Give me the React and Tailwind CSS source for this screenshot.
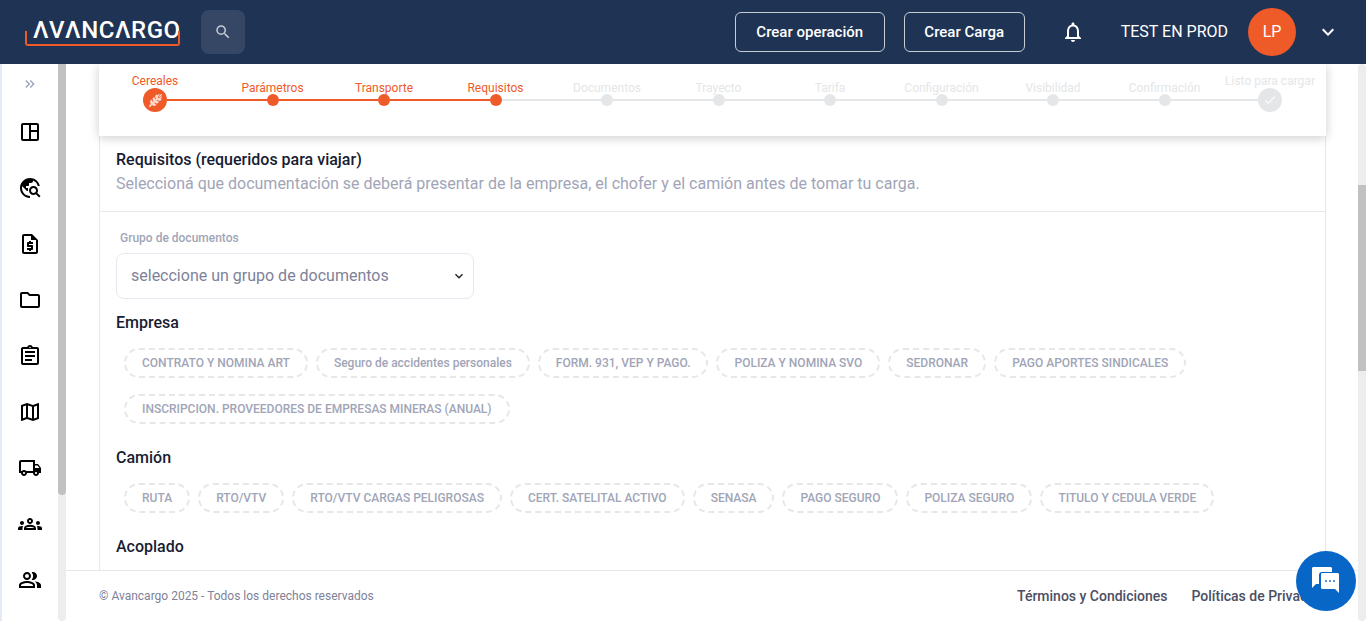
import {
  MdCheck,
  MdKeyboardArrowDown,
  MdKeyboardDoubleArrowRight,
  MdOutlineAssignment,
  MdOutlineFolder,
  MdOutlineGroups,
  MdOutlineLocalShipping,
  MdOutlineMap,
  MdOutlineNotifications,
  MdOutlinePeopleAlt,
  MdOutlineRequestQuote,
  MdOutlineSpaceDashboard,
  MdOutlineTravelExplore,
  MdSearch,
} from 'react-icons/md';
import { FaWheatAwn } from 'react-icons/fa6';

const SIDE_ICONS = [
  MdOutlineSpaceDashboard,
  MdOutlineTravelExplore,
  MdOutlineRequestQuote,
  MdOutlineFolder,
  MdOutlineAssignment,
  MdOutlineMap,
  MdOutlineLocalShipping,
  MdOutlineGroups,
  MdOutlinePeopleAlt,
];

const STEPS = [
  { label: 'Cereales', done: true, big: true },
  { label: 'Parámetros', done: true },
  { label: 'Transporte', done: true },
  { label: 'Requisitos', done: true },
  { label: 'Documentos' },
  { label: 'Trayecto' },
  { label: 'Tarifa' },
  { label: 'Configuración' },
  { label: 'Visibilidad' },
  { label: 'Confirmación' },
  { label: 'Listo para cargar', big: true },
];

const EMPRESA = [
  'CONTRATO Y NOMINA ART',
  'Seguro de accidentes personales',
  'FORM. 931, VEP Y PAGO.',
  'POLIZA Y NOMINA SVO',
  'SEDRONAR',
  'PAGO APORTES SINDICALES',
  'INSCRIPCION. PROVEEDORES DE EMPRESAS MINERAS (ANUAL)',
];

const CAMION = [
  'RUTA',
  'RTO/VTV',
  'RTO/VTV CARGAS PELIGROSAS',
  'CERT. SATELITAL ACTIVO',
  'SENASA',
  'PAGO SEGURO',
  'POLIZA SEGURO',
  'TITULO Y CEDULA VERDE',
];

function Step({ step }) {
  const color = step.done ? 'text-[#ef5a29]' : 'text-[#e4e6e8]';
  const bg = step.done ? 'bg-[#ef5a29]' : 'bg-[#e4e6e8]';
  return (
    <div className={`relative shrink-0 flex items-center justify-center rounded-full ${bg} ${step.big ? 'w-6 h-6' : 'w-3 h-3'}`}>
      <span className={`absolute left-1/2 -translate-x-1/2 whitespace-nowrap text-xs leading-4 ${color} ${step.big ? 'bottom-[23px]' : 'bottom-[10px]'}`}>
        {step.label}
      </span>
      {step.big && step.done && <FaWheatAwn className="text-[#fbd9cc]" size={13} />}
      {step.big && !step.done && <MdCheck className="text-white" size={14} />}
    </div>
  );
}

function Chips({ items }) {
  return (
    <div className="flex flex-wrap gap-x-2 gap-y-4 px-2">
      {items.map((c) => (
        <span key={c} className="h-[30px] flex items-center px-4 rounded-full border-2 border-dashed border-[#e6e7e9] text-xs font-medium text-[#a1a5b7] whitespace-nowrap">
          {c}
        </span>
      ))}
    </div>
  );
}

export default function App() {
  return (
    <div className="h-screen overflow-hidden flex flex-col bg-white font-['Roboto',sans-serif]">
      {/* Header */}
      <header className="h-16 shrink-0 bg-[#1f3354] flex items-center pl-[25px] pr-[26px] text-white">
        <div className="relative w-[155px] h-[30px] mr-[21px] -mt-[1px]">
          <span className="absolute left-[8px] -top-[1px] text-[24px] leading-[28px] font-medium tracking-[0.5px] whitespace-nowrap">ΛVΛNCΛRGO</span>
          <div className="absolute inset-x-0 top-[14px] h-[15px] border-2 border-t-0 border-[#ef5a29] rounded-b-[3px]" />
        </div>
        <button className="w-11 h-11 rounded-lg bg-[#364766] flex items-center justify-center text-[#c5cbd6]">
          <MdSearch size={18} />
        </button>
        <div className="ml-auto flex items-center">
          <button className="w-[150px] h-10 border border-[#c7ccd5] rounded-md text-[15px] font-medium">Crear operación</button>
          <button className="w-[121px] h-10 ml-[19px] border border-[#c7ccd5] rounded-md text-[15px] font-medium">Crear Carga</button>
          <MdOutlineNotifications size={24} className="ml-9" />
          <span className="ml-9 text-base">TEST EN PROD</span>
          <div className="ml-5 w-12 h-12 rounded-full bg-[#ef5a29] flex items-center justify-center text-base">LP</div>
          <MdKeyboardArrowDown size={24} className="ml-5" />
        </div>
      </header>

      <div className="flex-1 min-h-0 flex">
        {/* Sidebar */}
        <aside className="w-[58px] shrink-0 border-l-2 border-[#e3eaf4] flex flex-col items-center">
          <div className="h-10 flex items-center text-[#98a2b8]">
            <MdKeyboardDoubleArrowRight size={16} />
          </div>
          <div className="flex flex-col gap-8 pt-4 text-black">
            {SIDE_ICONS.map((Icon, i) => <Icon key={i} size={24} />)}
          </div>
        </aside>
        <div className="w-2 shrink-0 bg-[#ededed] rounded-b-full">
          <div className="h-[431px] bg-[#c1c1c1] rounded-b-sm" />
        </div>

        {/* Main */}
        <main className="flex-1 min-w-0 flex flex-col">
          <div className="flex-1 min-h-0 overflow-hidden pl-[33px] pr-[32px]">
            <div className="h-[72px] relative z-10 bg-white shadow-[0_2px_10px_rgba(0,0,0,0.2)] pl-[44px] pr-[44px] pt-6">
              <div className="h-6 flex items-center">
                {STEPS.map((s, i) => (
                  <div key={s.label} className={`flex items-center ${i > 0 ? 'flex-1' : ''}`}>
                    {i > 0 && <div className={`flex-1 h-0.5 ${s.done ? 'bg-[#ef5a29]' : 'bg-[#e4e6e8]'}`} />}
                    <Step step={s} />
                  </div>
                ))}
              </div>
            </div>
            <div className="border-x border-[#e6e7e9] h-full">
              <div className="h-[76px] border-b border-[#e6e7e9] px-4 pt-[14px]">
                <h2 className="text-base leading-5 font-medium text-[#181c32]">Requisitos (requeridos para viajar)</h2>
                <p className="mt-[4px] text-base leading-5 text-[#a1a5b7]">Seleccioná que documentación se deberá presentar de la empresa, el chofer y el camión antes de tomar tu carga.</p>
              </div>
              <div className="px-4 pt-[18px]">
                <label className="block pl-1 text-xs leading-4 font-medium text-[#a1a5b7]">Grupo de documentos</label>
                <div className="mt-[7px] w-[358px] h-[46px] border border-[#e4e9f2] rounded-lg flex items-center justify-between pl-[14px] pr-1.5 text-base text-[#7e8299]">
                  seleccione un grupo de documentos
                  <MdKeyboardArrowDown size={16} className="text-[#1e2129]" />
                </div>
                <h3 className="mt-[14px] text-base leading-5 font-medium text-[#181c32]">Empresa</h3>
                <div className="mt-[15px]"><Chips items={EMPRESA} /></div>
                <h3 className="mt-[24px] text-base leading-5 font-medium text-[#181c32]">Camión</h3>
                <div className="mt-[15px]"><Chips items={CAMION} /></div>
                <h3 className="mt-[24px] text-base leading-5 font-medium text-[#181c32]">Acoplado</h3>
              </div>
            </div>
          </div>
          <footer className="h-[51px] shrink-0 border-t border-[#e6e7e9] flex items-center pl-[33px] overflow-hidden">
            <span className="text-xs text-[#7e8299]">© Avancargo 2025 - Todos los derechos reservados</span>
            <div className="ml-auto flex gap-6 text-sm font-medium text-[#4b4f63] whitespace-nowrap w-[341px] shrink-0">
              <span>Términos y Condiciones</span>
              <span>Políticas de Privacidad</span>
            </div>
          </footer>
        </main>

        <div className="w-2 shrink-0 bg-[#ededed] rounded-full">
          <div className="h-[186px] mt-[121px] bg-[#c1c1c1]" />
        </div>
      </div>

      {/* Chat bubble */}
      <button className="absolute left-[1296px] top-[551px] w-[60px] h-[60px] rounded-full bg-[#0866c6] flex items-center justify-center">
        <svg width="32" height="30" viewBox="0 0 32 30">
          <path d="M2 2.5C2 1.7 2.7 1 3.5 1h17c.8 0 1.5.7 1.5 1.500V6H12c-1.700 0-3 1.300-3 3v9H6l-4 4z" fill="#fff" />
          <path d="M11 8.500C11 7.700 11.700 7 12.500 7h15c.8 0 1.500.7 1.500 1.500V23l.0 4-4-4H12.500c-.8 0-1.500-.7-1.500-1.500z" fill="#fff" />
          <circle cx="16" cy="15" r="0.9" fill="#0866c6" />
          <circle cx="20" cy="15" r="0.9" fill="#0866c6" />
          <circle cx="24" cy="15" r="0.9" fill="#0866c6" />
        </svg>
      </button>
    </div>
  );
}
